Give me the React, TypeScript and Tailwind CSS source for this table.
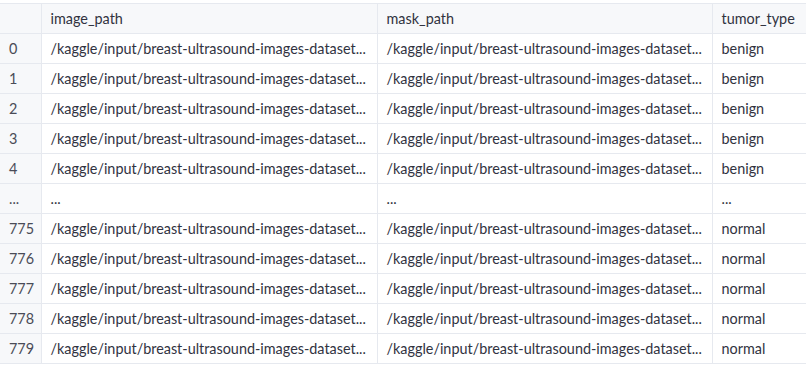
import React from 'react';

type Row = { idx: string; image: string; mask: string; type: string };

const PATH = '/kaggle/input/breast-ultrasound-images-dataset...';

const rows: Row[] = [
  { idx: '0', image: PATH, mask: PATH, type: 'benign' },
  { idx: '1', image: PATH, mask: PATH, type: 'benign' },
  { idx: '2', image: PATH, mask: PATH, type: 'benign' },
  { idx: '3', image: PATH, mask: PATH, type: 'benign' },
  { idx: '4', image: PATH, mask: PATH, type: 'benign' },
  { idx: '...', image: '...', mask: '...', type: '...' },
  { idx: '775', image: PATH, mask: PATH, type: 'normal' },
  { idx: '776', image: PATH, mask: PATH, type: 'normal' },
  { idx: '777', image: PATH, mask: PATH, type: 'normal' },
  { idx: '778', image: PATH, mask: PATH, type: 'normal' },
  { idx: '779', image: PATH, mask: PATH, type: 'normal' },
];

const cell = 'h-[30px] px-[9px] border border-[#e6e9ef] whitespace-nowrap overflow-hidden text-left font-normal';

export default function App() {
  return (
    <div
      className="w-[806px] h-[365px] bg-white pt-[3px] overflow-hidden text-[14.4px] text-[#31333f]"
      style={{ fontFamily: 'Lato, "Open Sans", sans-serif' }}
    >
      <table className="table-fixed border-collapse w-[820px]">
        <colgroup>
          <col className="w-[41px]" />
          <col className="w-[336px]" />
          <col className="w-[335px]" />
          <col className="w-[108px]" />
        </colgroup>
        <thead>
          <tr className="bg-[#f7f8fa]">
            <th className={`${cell} border-l-0`}></th>
            <th className={cell}>image_path</th>
            <th className={cell}>mask_path</th>
            <th className={cell}>tumor_type</th>
          </tr>
        </thead>
        <tbody>
          {rows.map((r, i) => (
            <tr key={i}>
              <td className={`${cell} border-l-0 bg-[#f7f8fa] text-[#4a4c57]`}>{r.idx}</td>
              <td className={cell}>{r.image}</td>
              <td className={cell}>{r.mask}</td>
              <td className={cell}>{r.type}</td>
            </tr>
          ))}
        </tbody>
      </table>
    </div>
  );
}
